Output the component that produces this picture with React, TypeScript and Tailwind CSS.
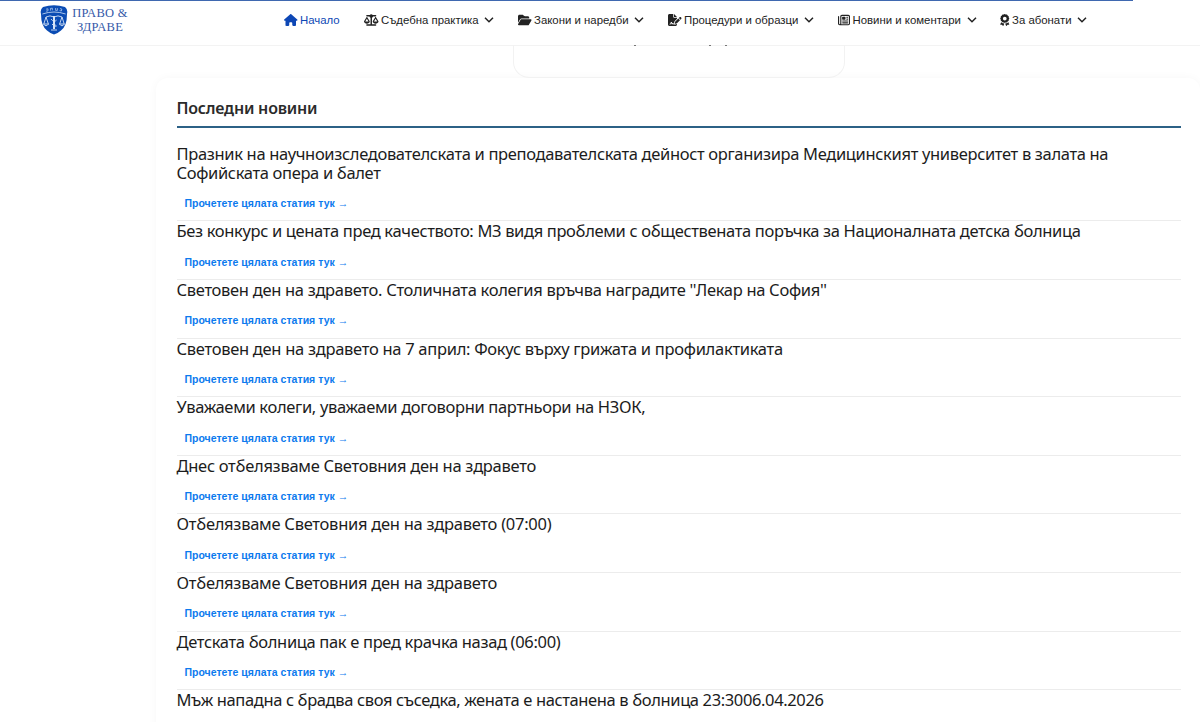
import type { ReactNode } from "react";
import {
  FaHouse,
  FaScaleBalanced,
  FaFolderOpen,
  FaFileSignature,
  FaRegNewspaper,
  FaAward,
} from "react-icons/fa6";

type NavItem = { label: string; icon: ReactNode; box: string; text: string; active?: boolean };

const nav: NavItem[] = [
  { label: "Начало", icon: <FaHouse className="h-[12px] w-[13.5px]" />, box: "w-[80px]", text: "w-[40px]", active: true },
  { label: "Съдебна практика", icon: <FaScaleBalanced className="h-[12px] w-[14.5px]" />, box: "w-[154px]", text: "w-[98px]" },
  { label: "Закони и наредби", icon: <FaFolderOpen className="h-[12px] w-[13.5px]" />, box: "w-[150px]", text: "w-[95px]" },
  { label: "Процедури и образци", icon: <FaFileSignature className="h-[12px] w-[13.5px]" />, box: "w-[170px]", text: "w-[115px]" },
  { label: "Новини и коментари", icon: <FaRegNewspaper className="h-[12px] w-[12px]" />, box: "w-[162px]", text: "w-[109px]" },
  { label: "За абонати", icon: <FaAward className="h-[12px] w-[9.5px]" />, box: "w-[100px]", text: "w-[60px]" },
];

const articles: { title: string; spacing: string }[] = [
  { title: "Празник на научноизследователската и преподавателската дейност организира Медицинският университет в залата на Софийската опера и балет", spacing: "tracking-[-0.335px]" },
  { title: "Без конкурс и цената пред качеството: МЗ видя проблеми с обществената поръчка за Националната детска болница", spacing: "tracking-[-0.345px]" },
  { title: "Световен ден на здравето. Столичната колегия връчва наградите ''Лекар на София''", spacing: "tracking-[-0.305px]" },
  { title: "Световен ден на здравето на 7 април: Фокус върху грижата и профилактиката", spacing: "tracking-[-0.288px]" },
  { title: "Уважаеми колеги, уважаеми договорни партньори на НЗОК,", spacing: "tracking-[-0.33px]" },
  { title: "Днес отбелязваме Световния ден на здравето", spacing: "tracking-[-0.285px]" },
  { title: "Отбелязваме Световния ден на здравето (07:00)", spacing: "tracking-[-0.27px]" },
  { title: "Отбелязваме Световния ден на здравето", spacing: "tracking-[-0.27px]" },
  { title: "Детската болница пак е пред крачка назад (06:00)", spacing: "tracking-[-0.335px]" },
  { title: "Мъж нападна с брадва своя съседка, жената е настанена в болница 23:3006.04.2026", spacing: "tracking-[-0.37px]" },
];

function Chevron() {
  return (
    <svg viewBox="0 0 10 6" className="ml-[5px] h-[6px] w-[10px] shrink-0" fill="none" stroke="currentColor" strokeWidth="1.5">
      <path d="M1 0.8 L5 4.8 L9 0.8" />
    </svg>
  );
}

function Crest() {
  return (
    <svg viewBox="0 0 28 30" className="h-[30px] w-[28px] shrink-0">
      <path d="M3 2 Q14 -1.4 25 2 Q28.2 4.5 27 9 Q27 21 21 25.5 Q17.5 28.6 14 29.5 Q10.5 28.6 7 25.5 Q1 21 1 9 Q-0.2 4.5 3 2Z" fill="#0b4cb4" />
      <path d="M2.4 9 Q14 5 25.6 9" stroke="#a9c4ea" strokeWidth="1" fill="none" />
      <path d="M6 4.2l2-.4v2l-2 .4M10.6 3.2v2.4M10.6 3.4l1.8-.2v2.2M15.6 3v2.4h1.8V3.2M20 3.6l1.8.4-.4 2-1.8-.4" stroke="#a9c4ea" strokeWidth="0.8" fill="none" />
      <g stroke="#d6e4f7" fill="none" strokeWidth="0.9">
        <path d="M6 12 Q10 9.8 14 12 Q18 9.8 22 12" />
        <path d="M6 12 L3.8 19 M6 12 L8.4 19 M22 12 L19.6 19 M22 12 L24.2 19" />
        <path d="M3.5 19 Q6 22.5 8.6 19Z M19.4 19 Q22 22.5 24.5 19Z" />
        <path d="M14 11v13" strokeWidth="2" />
        <path d="M11 14 Q14 18 16.6 15 M12 19.5 Q17 19 15.8 22 M11 25h6" />
      </g>
    </svg>
  );
}

export default function App() {
  return (
    <div className="relative flex h-[722px] w-[1200px] flex-col overflow-hidden bg-white font-['Liberation_Sans',sans-serif]">
      <header className="relative z-10 h-[46px] shrink-0 border-b border-[#f3f3f3] bg-white">
        <div className="h-px w-[1133px] bg-[#3f68b0]" />
        <div className="flex">
          <a className="ml-[40px] mt-[3px] flex h-[32px] w-[244px] items-center">
            <Crest />
            <span className="ml-[4px] w-[56px] whitespace-nowrap text-center font-['Liberation_Serif',serif] text-[12.5px] leading-[14px] tracking-[0.3px] text-[#3459a8]">
              ПРАВО &amp;
              <br />
              ЗДРАВЕ
            </span>
          </a>
          <nav className="mt-[9px] flex h-[20px]">
            {nav.map((n) => (
              <a
                key={n.label}
                className={`flex items-center whitespace-nowrap text-[11.4px] ${n.box} ${n.active ? "text-[#0d47b5]" : "text-[#222]"}`}
              >
                <span className="mr-[2.5px] shrink-0">{n.icon}</span>
                <span className={`pt-px ${n.text}`}>{n.label}</span>
                {!n.active && <Chevron />}
              </a>
            ))}
          </nav>
        </div>
      </header>

      {/* Bottom of the card scrolled under the header; only descender tips of its text stay visible */}
      <div className="relative z-20 -mt-px ml-[513px] flex h-[33px] w-[332px] shrink-0 rounded-b-[16px] border border-t-0 border-[#f2f2f2] pl-[120px]">
        <span className="h-px w-[2px] bg-[#777]" />
        <span className="ml-[73px] h-px w-[2px] bg-[#777]" />
        <span className="ml-[14px] h-px w-[2px] bg-[#777]" />
      </div>

      <main className="ml-[156px] h-[700px] w-[1044px] shrink-0 rounded-[12px] bg-white pl-[20.5px] pr-[19px] pt-[18px] shadow-[0_0_10px_rgba(0,0,0,0.035)]">
        <h2 className="h-[32px] border-b-2 border-[#2c6186] pt-px font-['Noto_Sans',sans-serif] text-[16px] font-semibold leading-[23px] tracking-[-0.22px] text-[#2b2b2b]">
          Последни новини
        </h2>
        <ul className="mt-[15.6px]">
          {articles.map((a) => (
            <li key={a.title} className="border-b border-[#ececec] pb-[10.2px]">
              <h3 lang="sr" className={`font-['Noto_Sans',sans-serif] text-[16.5px] leading-[19.3px] text-[#1c1c1c] ${a.spacing}`}>
                {a.title}
              </h3>
              <a className="ml-[7.9px] mt-[14.1px] block h-[14px] text-[10.5px] font-bold leading-[14px] tracking-[0.03px] text-[#0c7aee]">
                Прочетете цялата статия тук →
              </a>
            </li>
          ))}
        </ul>
      </main>
    </div>
  );
}
